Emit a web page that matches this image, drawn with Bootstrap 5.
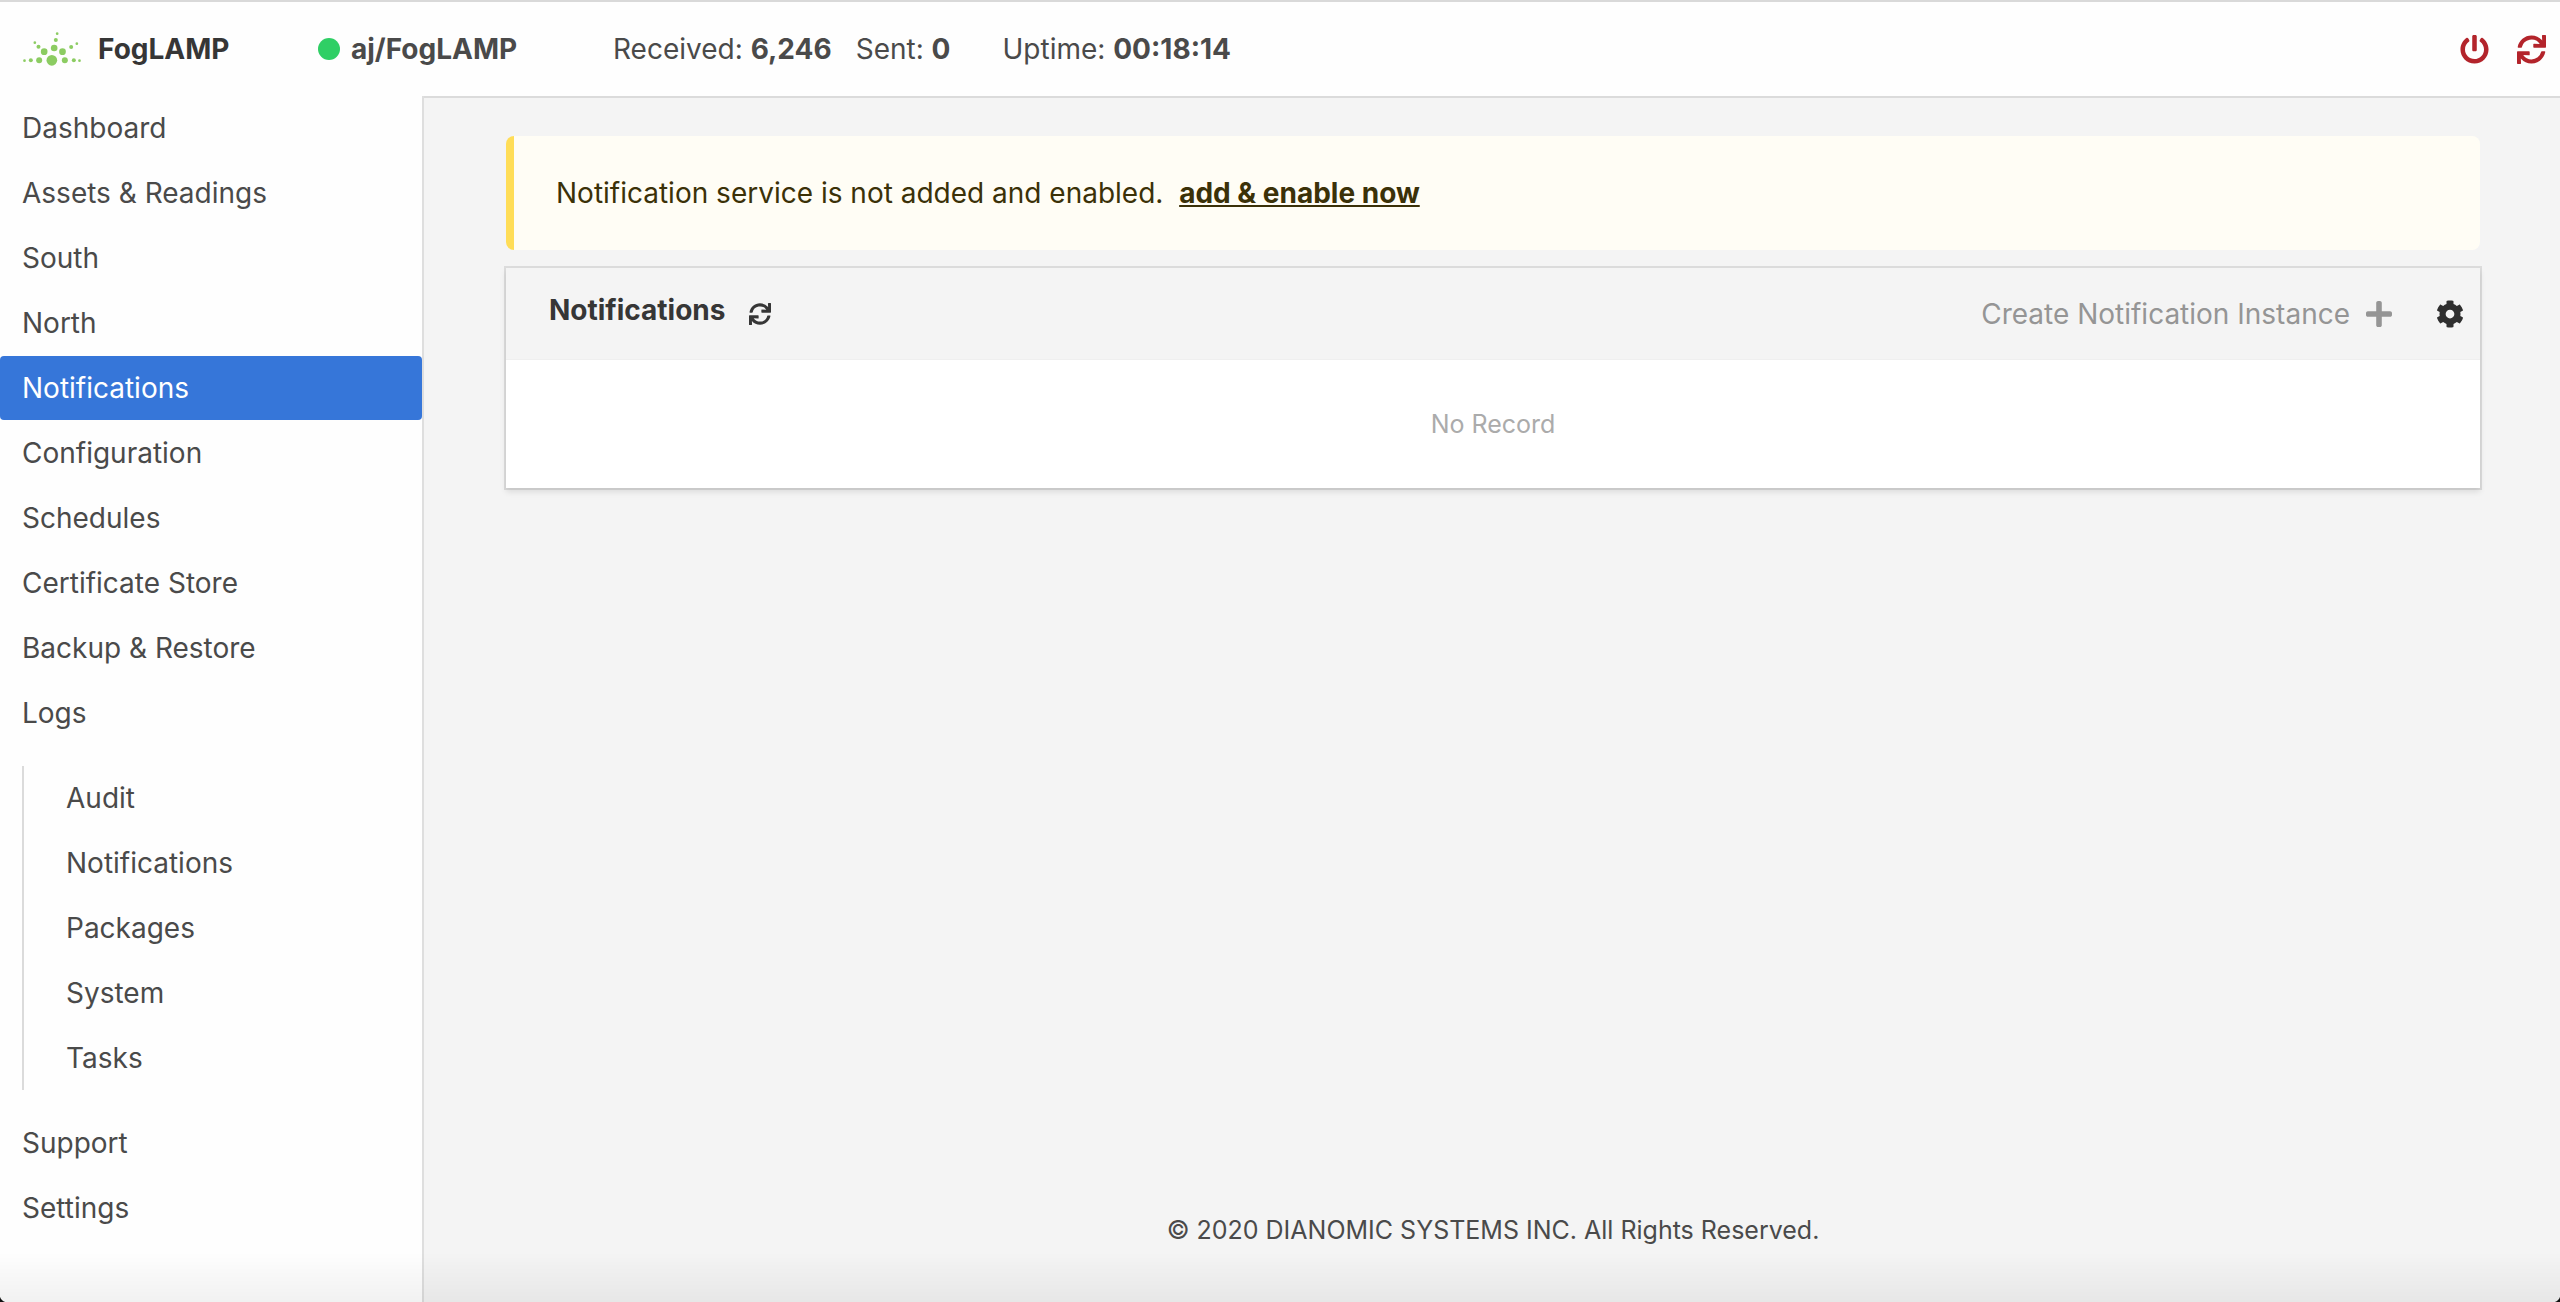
<!DOCTYPE html>
<html lang="en">
<head>
<meta charset="utf-8">
<meta name="viewport" content="width=device-width, initial-scale=1">
<title>FogLAMP</title>
<link rel="stylesheet" href="https://cdn.jsdelivr.net/npm/bootstrap@5.3.0/dist/css/bootstrap.min.css">
<style>
  body { font-family: Inter, "Liberation Sans", sans-serif; font-size: 28px; line-height: 42px; color: #4a4a4a; background: #f4f4f4; }
  a { color: inherit; }
  svg { display: block; fill: currentColor; }
  .topbar { height: 98px; border-top: 2px solid #d9d9d9; border-bottom: 2px solid #dbdbdb; background: #fefefe; padding-left: 22px; padding-right: 14px; }
  .brand-link { width: 296px; gap: 16px; color: #363636; }
  .host-name { width: 295px; gap: 11px; }
  .status-dot { width: 22px; height: 22px; background: #2fcf65; }
  .power-tools { gap: 28px; color: #b3242b; }
  .plain-btn { background: none; border: 0; padding: 0; color: inherit; }
  .side-menu { width: 424px; margin-top: -2px; background: #fefefe; border-right: 2px solid #dedede; z-index: 1; }
  .side-menu .nav { gap: 1px; }
  .side-menu .nav-link { color: #4a4a4a; padding: 11px 20px 11px 22px; border-radius: 4px; }
  .side-menu .nav-link.active { background: #3676d9; color: #fff; }
  .sub-menu { margin: 20px 0 20px 22px; padding-left: 20px; border-left: 2px solid #dbdbdb; }
  .content-area { padding: 38px 80px 51px 82px; }
  .notice { background: #fffdf5; color: #3b3108; border-left: 8px solid #ffdd57; border-radius: 8px; padding: 36px 42px; margin-bottom: 18px; }
  .notice a { color: inherit; text-decoration-skip-ink: none; }
  .panel { background: #fff; box-shadow: 0 4px 6px rgba(10,10,10,.1), 0 0 0 2px rgba(10,10,10,.1); }
  .panel-top { background: #f4f4f4; height: 92px; padding: 0 16px 0 43px; border-bottom: 1px solid #efefef; }
  .panel-top h1 { font-size: 28px; line-height: 42px; color: #363636; margin-bottom: 8px; }
  .refresh-btn { color: #363636; margin-left: 24px; }
  .create-btn { color: #959595; gap: 16px; }
  .settings-btn { color: #2f2f2f; margin-left: 44px; }
  .empty-text { color: #ababab; font-size: 25px; padding: 43px 0; }
  .page-foot { font-size: 25px; }
  .edge-shade { height: 50px; pointer-events: none; z-index: 5;
    background: radial-gradient(circle at 8px 0, transparent 8px, #111 9px) 0 100% / 8px 8px no-repeat,
                radial-gradient(circle at 0 0, transparent 8px, #111 9px) 100% 100% / 8px 8px no-repeat,
                linear-gradient(transparent, rgba(0,0,0,.05)); }
</style>
<script src="https://cdn.jsdelivr.net/npm/bootstrap@5.3.0/dist/js/bootstrap.bundle.min.js"></script>
</head>
<body class="d-flex flex-column min-vh-100">
<svg class="d-none" aria-hidden="true">
  <symbol id="sync" viewBox="0 0 512 512"><path d="M440.65 12.57l4 82.77A247.16 247.16 0 0 0 255.83 8C134.73 8 33.91 94.92 12.29 209.82A12 12 0 0 0 24.09 224h49.05a12 12 0 0 0 11.67-9.26 175.91 175.91 0 0 1 317-56.94l-101.46-4.86a12 12 0 0 0-12.57 12v47.41a12 12 0 0 0 12 12H500a12 12 0 0 0 12-12V12a12 12 0 0 0-12-12h-47.37a12 12 0 0 0-11.98 12.57zM255.83 432a175.61 175.61 0 0 1-146-77.8l101.8 4.87a12 12 0 0 0 12.57-12v-47.4a12 12 0 0 0-12-12H12a12 12 0 0 0-12 12V500a12 12 0 0 0 12 12h47.35a12 12 0 0 0 12-12.6l-4.15-82.57A247.17 247.17 0 0 0 255.83 504c121.11 0 221.93-86.92 243.55-201.82a12 12 0 0 0-11.8-14.18h-49.05a12 12 0 0 0-11.67 9.26A175.86 175.86 0 0 1 255.83 432z"/></symbol>
</svg>

<header class="topbar d-flex align-items-center flex-shrink-0">
  <a href="#" class="brand-link d-flex align-items-center fw-bold text-decoration-none">
    <svg width="60" height="34" viewBox="37 33 177 102" style="fill:#8ccc62" aria-hidden="true">
      <circle cx="125" cy="118" r="16"/><circle cx="87" cy="118" r="9"/><circle cx="62" cy="118" r="6"/><circle cx="43" cy="119" r="4"/>
      <circle cx="164" cy="118" r="9"/><circle cx="191" cy="118" r="6"/><circle cx="208" cy="119" r="4"/>
      <circle cx="102" cy="92" r="10"/><circle cx="85" cy="77" r="6"/><circle cx="74" cy="65" r="4"/>
      <circle cx="132" cy="81" r="10"/><circle cx="137" cy="57" r="6"/><circle cx="141" cy="38" r="4"/>
      <circle cx="157" cy="92" r="10"/><circle cx="183" cy="78" r="6"/><circle cx="200" cy="68" r="4"/>
    </svg>
    FogLAMP
  </a>
  <div class="host-name d-flex align-items-center fw-bold"><span class="status-dot rounded-circle"></span>aj/FogLAMP</div>
  <div class="me-4">Received: <b>6,246</b></div>
  <div class="me-5 pe-1">Sent: <b>0</b></div>
  <div>Uptime: <b>00:18:14</b></div>
  <div class="power-tools d-flex ms-auto">
    <button type="button" class="plain-btn" aria-label="Shut down">
      <svg width="29" height="29" viewBox="0 0 512 512"><path d="M400 54.1c63 45 104 118.6 104 201.9 0 136.8-110.8 247.7-247.5 248C120 504.3 8.2 393 8 256.4 7.9 173.1 48.9 99.3 111.8 54.2c11.7-8.3 28-4.8 35 7.7L162.6 90c5.9 10.5 3.1 23.8-6.6 31-41.5 30.8-68 79.6-68 134.9-.1 92.3 74.5 168.1 168 168.1 91.6 0 168.6-74.2 168-169.1-.3-51.8-24.7-101.8-68.1-134-9.7-7.2-12.4-20.5-6.5-30.9l15.8-28.1c7-12.4 23.2-16.1 34.8-7.8zM296 264V24c0-13.3-10.7-24-24-24h-32c-13.3 0-24 10.7-24 24v240c0 13.3 10.7 24 24 24h32c13.3 0 24-10.7 24-24z"/></svg>
    </button>
    <button type="button" class="plain-btn" aria-label="Restart"><svg width="29" height="29"><use href="#sync"/></svg></button>
  </div>
</header>

<div class="d-flex flex-grow-1">
  <aside class="side-menu flex-shrink-0 position-relative">
    <nav class="nav flex-column flex-nowrap">
      <a class="nav-link" href="#">Dashboard</a>
      <a class="nav-link" href="#">Assets &amp; Readings</a>
      <a class="nav-link" href="#">South</a>
      <a class="nav-link" href="#">North</a>
      <a class="nav-link active" aria-current="page" href="#">Notifications</a>
      <a class="nav-link" href="#">Configuration</a>
      <a class="nav-link" href="#">Schedules</a>
      <a class="nav-link" href="#">Certificate Store</a>
      <a class="nav-link" href="#">Backup &amp; Restore</a>
      <a class="nav-link" href="#">Logs</a>
      <div class="nav sub-menu flex-column">
        <a class="nav-link" href="#">Audit</a>
        <a class="nav-link" href="#">Notifications</a>
        <a class="nav-link" href="#">Packages</a>
        <a class="nav-link" href="#">System</a>
        <a class="nav-link" href="#">Tasks</a>
      </div>
      <a class="nav-link" href="#">Support</a>
      <a class="nav-link" href="#">Settings</a>
    </nav>
  </aside>

  <main class="content-area flex-grow-1 d-flex flex-column">
    <div class="notice">Notification service is not added and enabled. &nbsp;<a href="#" class="fw-bold">add &amp; enable now</a></div>
    <section class="panel">
      <div class="panel-top d-flex align-items-center">
        <h1 class="fw-bold">Notifications</h1>
        <button type="button" class="plain-btn refresh-btn" aria-label="Refresh"><svg width="22" height="22"><use href="#sync"/></svg></button>
        <button type="button" class="plain-btn create-btn d-flex align-items-center ms-auto">Create Notification Instance
          <svg width="26" height="30" viewBox="0 0 448 512" aria-hidden="true"><path d="M416 208H272V64c0-17.67-14.33-32-32-32h-32c-17.67 0-32 14.33-32 32v144H32c-17.67 0-32 14.33-32 32v32c0 17.67 14.33 32 32 32h144v144c0 17.67 14.33 32 32 32h32c17.67 0 32-14.33 32-32V304h144c17.67 0 32-14.33 32-32v-32c0-17.67-14.33-32-32-32z"/></svg>
        </button>
        <button type="button" class="plain-btn settings-btn" aria-label="Notification settings">
          <svg width="28" height="28" viewBox="0 0 512 512"><path d="M487.4 315.7l-42.6-24.6c4.3-23.2 4.3-47 0-70.2l42.6-24.6c4.9-2.8 7.1-8.6 5.5-14-11.1-35.6-30-67.8-54.7-94.6-3.8-4.1-10-5.1-14.8-2.3L380.8 110c-17.9-15.4-38.5-27.3-60.8-35.1V25.8c0-5.6-3.9-10.5-9.4-11.7-36.7-8.2-74.3-7.8-109.2 0-5.5 1.2-9.4 6.1-9.4 11.7V75c-22.2 7.9-42.8 19.8-60.8 35.1L88.7 85.5c-4.9-2.8-11-1.9-14.8 2.3-24.7 26.7-43.6 58.9-54.7 94.6-1.7 5.4.6 11.2 5.5 14L67.3 221c-4.3 23.2-4.3 47 0 70.2l-42.6 24.6c-4.9 2.8-7.1 8.6-5.5 14 11.1 35.6 30 67.8 54.7 94.6 3.8 4.1 10 5.1 14.8 2.3l42.6-24.6c17.9 15.4 38.5 27.3 60.8 35.1v49.2c0 5.6 3.9 10.5 9.4 11.7 36.7 8.2 74.3 7.8 109.2 0 5.5-1.2 9.4-6.1 9.4-11.7v-49.2c22.2-7.9 42.8-19.8 60.8-35.1l42.6 24.6c4.9 2.8 11 1.9 14.8-2.3 24.7-26.7 43.6-58.9 54.7-94.6 1.5-5.5-.7-11.3-5.6-14.1zM256 336c-44.1 0-80-35.9-80-80s35.9-80 80-80 80 35.9 80 80-35.9 80-80 80z"/></svg>
        </button>
      </div>
      <div class="empty-text text-center">No Record</div>
    </section>
    <footer class="page-foot text-center mt-auto">© 2020 DIANOMIC SYSTEMS INC. All Rights Reserved.</footer>
  </main>
</div>
<div class="edge-shade position-fixed bottom-0 start-0 end-0"></div>
</body>
</html>
